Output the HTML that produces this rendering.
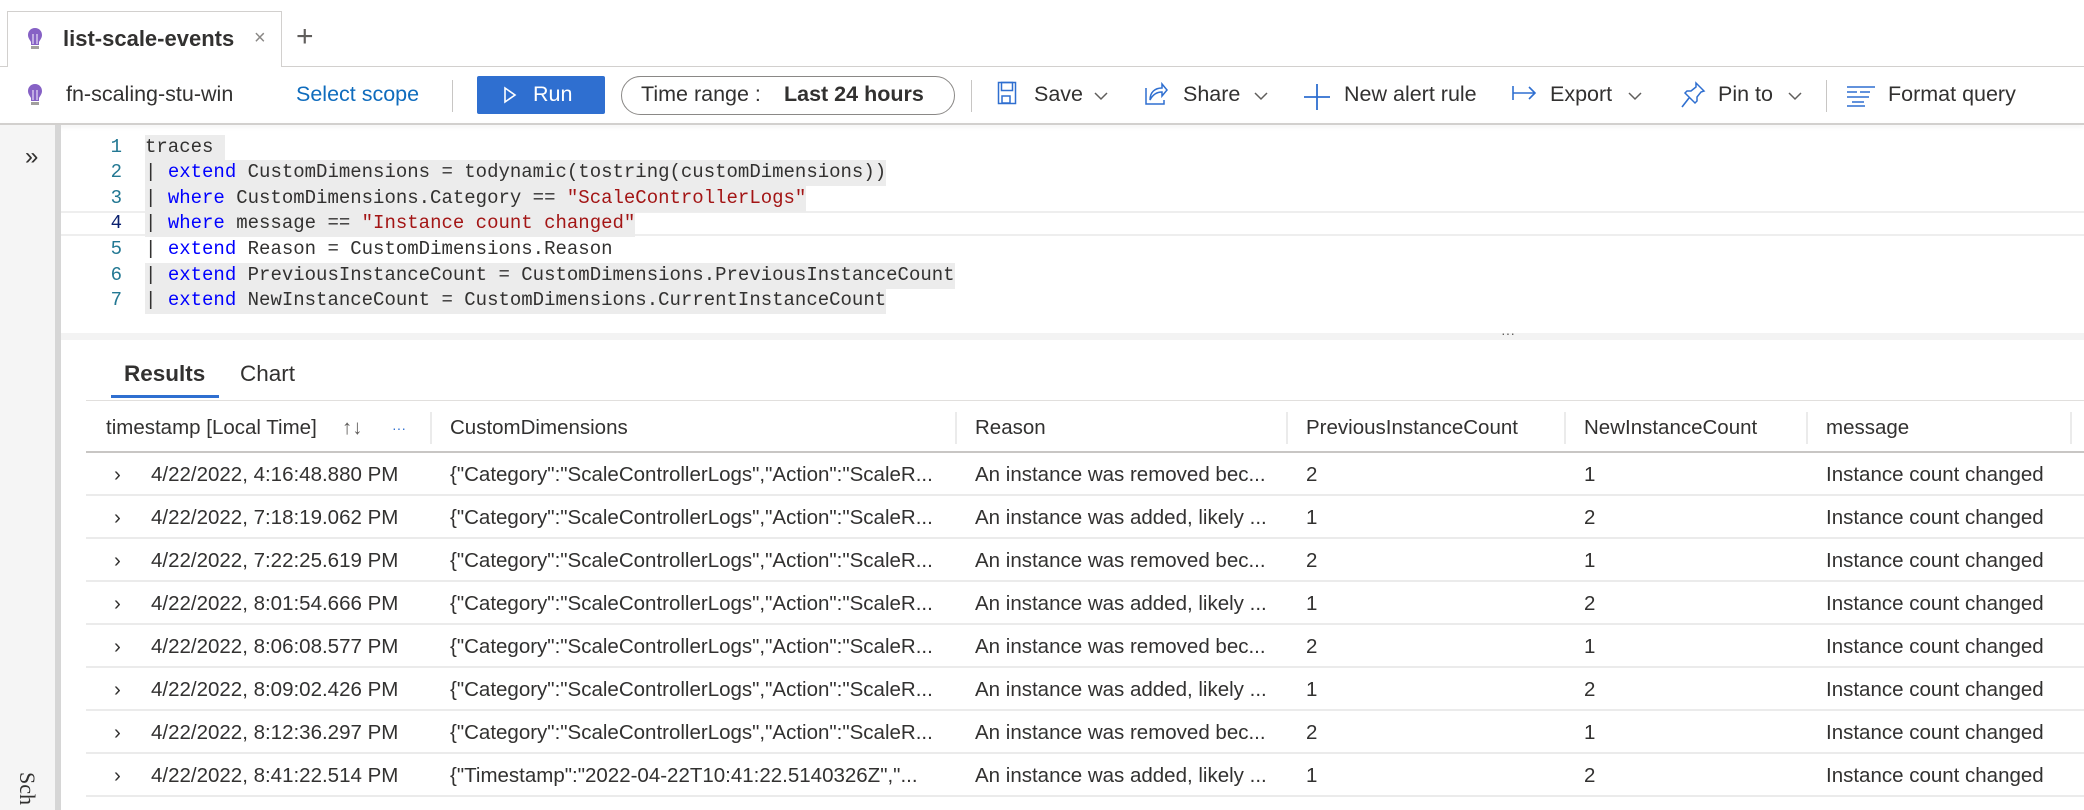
<!DOCTYPE html>
<html><head><meta charset="utf-8"><style>
*{margin:0;padding:0;box-sizing:border-box}
body{width:2084px;height:810px;overflow:hidden;background:#fff;font-family:"Liberation Sans",Arial,sans-serif;color:#323130;position:relative}
.a{position:absolute;white-space:nowrap}
.tb{font-size:21.5px;top:82px;line-height:25px}
.sep{position:absolute;width:1px;background:#c8c6c4}
.ln{position:absolute;left:100px;width:22px;text-align:right;font-family:"Liberation Mono",monospace;font-size:19px;line-height:25.6px;color:#237893}
.cl{position:absolute;left:145px;background:#ececec;height:25.6px;line-height:25.6px;font-family:"Liberation Mono",monospace;font-size:19px;white-space:pre}
.k{color:#0000ff}.s{color:#a31515}
.row{position:absolute;left:86px;right:0;height:43px;border-bottom:2px solid #ebebeb;font-size:20.5px;line-height:43px}
.row span{position:absolute;white-space:nowrap}
.hd{position:absolute;font-size:20.5px;top:416px;white-space:nowrap}
.cs{position:absolute;top:412px;width:2px;height:32px;background:#ebebeb}
</style></head><body>
<!-- tab bar -->
<div class="a" style="left:7px;top:11px;width:275px;height:56px;border:1px solid #d2d0ce;border-bottom:none;background:#fff;z-index:2"></div>
<div class="a" style="left:0;top:66px;width:2084px;height:1px;background:#d2d0ce"></div>
<svg class="a" style="left:27px;top:27px;z-index:3" width="16" height="26" viewBox="0 0 16 26"><path d="M8 1C3.5 1 1 4.5 1 8c0 3 2 5 3 7v3h8v-3c1-2 3-4 3-7 0-3.5-2.5-7-7-7z" fill="#8661c5"/><rect x="4" y="19" width="8" height="3" fill="#a19f9d"/><path d="M6 9v8M10 9v8M5 8h2M9 8h2" stroke="#e5dcf5" stroke-width="1.2"/></svg>
<div class="a" style="left:63px;top:26px;font-size:22px;font-weight:bold;z-index:3;color:#323130">list-scale-events</div>
<div class="a" style="left:254px;top:27px;font-size:20px;color:#8a8886;z-index:3">×</div>
<div class="a" style="left:296px;top:20px;font-size:30px;font-weight:300;color:#605e5c">+</div>
<!-- toolbar -->
<svg class="a" style="left:27px;top:83px" width="16" height="26" viewBox="0 0 16 26"><path d="M8 1C3.5 1 1 4.5 1 8c0 3 2 5 3 7v3h8v-3c1-2 3-4 3-7 0-3.5-2.5-7-7-7z" fill="#8661c5"/><rect x="4" y="19" width="8" height="3" fill="#a19f9d"/><path d="M6 9v8M10 9v8M5 8h2M9 8h2" stroke="#e5dcf5" stroke-width="1.2"/></svg>
<div class="a tb" style="left:66px">fn-scaling-stu-win</div>
<div class="a tb" style="left:296px;color:#0f6cbd">Select scope</div>
<div class="sep" style="left:452px;top:80px;height:32px"></div>
<div class="a" style="left:477px;top:76px;width:128px;height:38px;background:#2f6fd0;border-radius:2px"></div>
<svg class="a" style="left:503px;top:86px" width="14" height="18"><path d="M2 2L12 9L2 16Z" fill="none" stroke="#fff" stroke-width="1.6"/></svg>
<div class="a tb" style="left:533px;color:#fff">Run</div>
<div class="a" style="left:621px;top:76px;width:334px;height:39px;border:1px solid #8a8886;border-radius:20px"></div>
<div class="a tb" style="left:641px">Time range :&nbsp;</div>
<div class="a tb" style="left:784px;font-weight:bold">Last 24 hours</div>
<div class="sep" style="left:971px;top:80px;height:32px"></div>
<svg class="a" style="left:997px;top:81px" width="20" height="24"><rect x="1.5" y="1.5" width="17" height="21" fill="none" stroke="#2f6fd0" stroke-width="1.5"/><rect x="4.5" y="1.5" width="11" height="8" fill="none" stroke="#2f6fd0" stroke-width="1.5"/><rect x="5" y="15" width="8" height="7" fill="none" stroke="#2f6fd0" stroke-width="1.5"/></svg>
<div class="a tb" style="left:1034px">Save</div>
<svg class="a" style="left:1093px;top:90px" width="16" height="12"><path d="M2 3l6 6 6-6" fill="none" stroke="#605e5c" stroke-width="1.5"/></svg>
<svg class="a" style="left:1144px;top:80px" width="24" height="26"><path d="M2 8v16h18v-4" fill="none" stroke="#2f6fd0" stroke-width="1.5"/><path d="M6 20c0-8 5-12 12-12V4l5 6-5 6v-4c-5 0-9 2-12 8z" fill="none" stroke="#2f6fd0" stroke-width="1.5"/></svg>
<div class="a tb" style="left:1183px">Share</div>
<svg class="a" style="left:1253px;top:90px" width="16" height="12"><path d="M2 3l6 6 6-6" fill="none" stroke="#605e5c" stroke-width="1.5"/></svg>
<svg class="a" style="left:1303px;top:83px" width="28" height="28"><path d="M14 1v26M1 14h26" stroke="#2f6fd0" stroke-width="1.8"/></svg>
<div class="a tb" style="left:1344px">New alert rule</div>
<svg class="a" style="left:1511px;top:84px" width="28" height="20"><path d="M2 2v14M2 9h22M18 3l6 6-6 6" fill="none" stroke="#2f6fd0" stroke-width="1.6"/></svg>
<div class="a tb" style="left:1550px">Export</div>
<svg class="a" style="left:1627px;top:90px" width="16" height="12"><path d="M2 3l6 6 6-6" fill="none" stroke="#605e5c" stroke-width="1.5"/></svg>
<svg class="a" style="left:1680px;top:81px" width="26" height="28"><path d="M16 2l8 8-3 1-4 5 0 4-2 2-10-10 2-2 4 0 5-4z" fill="none" stroke="#2f6fd0" stroke-width="1.5"/><path d="M9 17L2 26" stroke="#2f6fd0" stroke-width="1.6"/></svg>
<div class="a tb" style="left:1718px">Pin to</div>
<svg class="a" style="left:1787px;top:90px" width="16" height="12"><path d="M2 3l6 6 6-6" fill="none" stroke="#605e5c" stroke-width="1.5"/></svg>
<div class="sep" style="left:1826px;top:80px;height:32px"></div>
<svg class="a" style="left:1846px;top:85px" width="30" height="22"><path d="M1 2h28M1 7h10M14 7h10M1 12h22M6 17h12M1 21h18" stroke="#2f6fd0" stroke-width="1.6"/></svg>
<div class="a tb" style="left:1888px">Format query</div>
<div class="a" style="left:0;top:123px;width:2084px;height:2px;background:#d2d0ce;box-shadow:0 2px 4px rgba(0,0,0,.08)"></div>
<!-- sidebar -->
<div class="a" style="left:0;top:125px;width:55px;height:685px;background:#f5f5f5"></div>
<div class="a" style="left:55px;top:125px;width:6px;height:685px;background:#d6d6d6"></div>
<div class="a" style="left:25px;top:147px;font-size:24px;color:#323130;line-height:20px">»</div>
<div class="a" style="font-family:'Liberation Serif',serif;font-size:22px;transform:rotate(90deg);transform-origin:left top;left:40px;top:772px;color:#323130">Sch</div>
<!-- editor -->
<div class="a" style="left:61px;top:211px;width:2023px;height:25px;border-top:2px solid #eeeeee;border-bottom:2px solid #eeeeee"></div>
<div class="ln" style="top:135px">1</div><div class="ln" style="top:160px">2</div><div class="ln" style="top:186px">3</div><div class="ln" style="top:211px;color:#0b216f">4</div><div class="ln" style="top:237px">5</div><div class="ln" style="top:263px">6</div><div class="ln" style="top:288px">7</div>
<div class="cl" style="top:135px">traces </div>
<div class="cl" style="top:160px">| <span class="k">extend</span> CustomDimensions = todynamic(tostring(customDimensions))</div>
<div class="cl" style="top:186px">| <span class="k">where</span> CustomDimensions.Category == <span class="s">"ScaleControllerLogs"</span></div>
<div class="cl" style="top:211px">| <span class="k">where</span> message == <span class="s">"Instance count changed"</span></div>
<div class="cl" style="top:237px;background:#fff">| <span class="k">extend</span> Reason = CustomDimensions.Reason</div>
<div class="cl" style="top:263px">| <span class="k">extend</span> PreviousInstanceCount = CustomDimensions.PreviousInstanceCount</div>
<div class="cl" style="top:288px">| <span class="k">extend</span> NewInstanceCount = CustomDimensions.CurrentInstanceCount</div>
<!-- splitter -->
<div class="a" style="left:61px;top:333px;width:2023px;height:7px;background:#f3f3f3"></div>
<div class="a" style="left:1501px;top:325px;font-size:14px;color:#605e5c">···</div>
<!-- results tabs -->
<div class="a" style="left:124px;top:361px;font-size:22.5px;font-weight:bold">Results</div>
<div class="a" style="left:240px;top:361px;font-size:22.5px">Chart</div>
<div class="a" style="left:111px;top:395px;width:108px;height:3px;background:#2f6fd0"></div>
<div class="a" style="left:86px;top:400px;width:1998px;height:1px;background:#e1dfdd"></div>
<!-- header -->
<div class="hd" style="left:106px">timestamp [Local Time]</div>
<div class="hd" style="left:342px;color:#605e5c">↑↓</div>
<div class="hd" style="left:392px;color:#2f6fd0;font-size:14px;top:420px">···</div>
<div class="cs" style="left:430px"></div>
<div class="hd" style="left:450px">CustomDimensions</div>
<div class="cs" style="left:955px"></div>
<div class="hd" style="left:975px">Reason</div>
<div class="cs" style="left:1286px"></div>
<div class="hd" style="left:1306px">PreviousInstanceCount</div>
<div class="cs" style="left:1564px"></div>
<div class="hd" style="left:1584px">NewInstanceCount</div>
<div class="cs" style="left:1806px"></div>
<div class="hd" style="left:1826px">message</div>
<div class="cs" style="left:2070px"></div>
<div class="a" style="left:86px;top:451px;width:1998px;height:2px;background:#c8c6c4"></div>
<!-- rows -->
<div class="row" style="top:453px"><span style="left:28px">›</span><span style="left:65px">4/22/2022, 4:16:48.880 PM</span><span style="left:364px">{"Category":"ScaleControllerLogs","Action":"ScaleR...</span><span style="left:889px">An instance was removed bec...</span><span style="left:1220px">2</span><span style="left:1498px">1</span><span style="left:1740px">Instance count changed</span></div>
<div class="row" style="top:496px"><span style="left:28px">›</span><span style="left:65px">4/22/2022, 7:18:19.062 PM</span><span style="left:364px">{"Category":"ScaleControllerLogs","Action":"ScaleR...</span><span style="left:889px">An instance was added, likely ...</span><span style="left:1220px">1</span><span style="left:1498px">2</span><span style="left:1740px">Instance count changed</span></div>
<div class="row" style="top:539px"><span style="left:28px">›</span><span style="left:65px">4/22/2022, 7:22:25.619 PM</span><span style="left:364px">{"Category":"ScaleControllerLogs","Action":"ScaleR...</span><span style="left:889px">An instance was removed bec...</span><span style="left:1220px">2</span><span style="left:1498px">1</span><span style="left:1740px">Instance count changed</span></div>
<div class="row" style="top:582px"><span style="left:28px">›</span><span style="left:65px">4/22/2022, 8:01:54.666 PM</span><span style="left:364px">{"Category":"ScaleControllerLogs","Action":"ScaleR...</span><span style="left:889px">An instance was added, likely ...</span><span style="left:1220px">1</span><span style="left:1498px">2</span><span style="left:1740px">Instance count changed</span></div>
<div class="row" style="top:625px"><span style="left:28px">›</span><span style="left:65px">4/22/2022, 8:06:08.577 PM</span><span style="left:364px">{"Category":"ScaleControllerLogs","Action":"ScaleR...</span><span style="left:889px">An instance was removed bec...</span><span style="left:1220px">2</span><span style="left:1498px">1</span><span style="left:1740px">Instance count changed</span></div>
<div class="row" style="top:668px"><span style="left:28px">›</span><span style="left:65px">4/22/2022, 8:09:02.426 PM</span><span style="left:364px">{"Category":"ScaleControllerLogs","Action":"ScaleR...</span><span style="left:889px">An instance was added, likely ...</span><span style="left:1220px">1</span><span style="left:1498px">2</span><span style="left:1740px">Instance count changed</span></div>
<div class="row" style="top:711px"><span style="left:28px">›</span><span style="left:65px">4/22/2022, 8:12:36.297 PM</span><span style="left:364px">{"Category":"ScaleControllerLogs","Action":"ScaleR...</span><span style="left:889px">An instance was removed bec...</span><span style="left:1220px">2</span><span style="left:1498px">1</span><span style="left:1740px">Instance count changed</span></div>
<div class="row" style="top:754px"><span style="left:28px">›</span><span style="left:65px">4/22/2022, 8:41:22.514 PM</span><span style="left:364px">{"Timestamp":"2022-04-22T10:41:22.5140326Z","...</span><span style="left:889px">An instance was added, likely ...</span><span style="left:1220px">1</span><span style="left:1498px">2</span><span style="left:1740px">Instance count changed</span></div>
</body></html>
